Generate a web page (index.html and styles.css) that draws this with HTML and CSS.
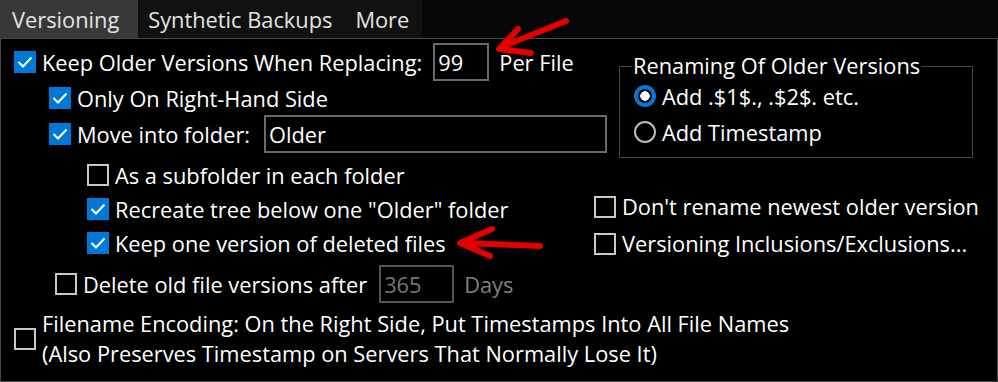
FILE: index.html
```html
<!DOCTYPE html>
<html lang="en">
<head>
	<meta charset="UTF-8">
	<title>Versioning</title>
	<link rel="stylesheet" href="styles.css">
</head>
<body>
    <div class="tabs">
        <div class="tab active">Versioning</div>
        <div class="tab">Synthetic Backups</div>
        <div class="tab">More</div>
    </div>
    <div class="panel">
        <div class="left">
            <div class="row r1">
                <span class="cb on"><svg viewBox="0 0 22 22"><polyline points="4.5,11 9,15.5 17.5,6.5"/></svg></span>
                <span>Keep Older Versions When Replacing:</span>
                <span class="field num">99</span>
                <span class="after">Per File</span>
            </div>
            <div class="row r2">
                <span class="cb on"><svg viewBox="0 0 22 22"><polyline points="4.5,11 9,15.5 17.5,6.5"/></svg></span>
                <span>Only On Right-Hand Side</span>
            </div>
            <div class="row r3">
                <span class="cb on"><svg viewBox="0 0 22 22"><polyline points="4.5,11 9,15.5 17.5,6.5"/></svg></span>
                <span>Move into folder:</span>
                <span class="field folder">Older</span>
            </div>
            <div class="row r4">
                <span class="cb"></span>
                <span>As a subfolder in each folder</span>
            </div>
            <div class="row r5">
                <span class="cb on"><svg viewBox="0 0 22 22"><polyline points="4.5,11 9,15.5 17.5,6.5"/></svg></span>
                <span>Recreate tree below one "Older" folder</span>
            </div>
            <div class="row r6">
                <span class="cb on"><svg viewBox="0 0 22 22"><polyline points="4.5,11 9,15.5 17.5,6.5"/></svg></span>
                <span>Keep one version of deleted files</span>
            </div>
            <div class="row r7">
                <span class="cb"></span>
                <span>Delete old file versions after</span>
                <span class="field days disabled">365</span>
                <span class="after dim">Days</span>
            </div>
            <div class="row r8">
                <span class="cb"></span>
                <span class="two">Filename Encoding: On the Right Side, Put Timestamps Into All File Names<br>(Also Preserves Timestamp on Servers That Normally Lose It)</span>
            </div>
        </div>
        <div class="right">
            <fieldset class="group">
                <legend>Renaming Of Older Versions</legend>
                <div class="radio-row"><span class="radio on"></span><span>Add .$1$., .$2$. etc.</span></div>
                <div class="radio-row"><span class="radio"></span><span>Add Timestamp</span></div>
            </fieldset>
            <div class="row rr1">
                <span class="cb"></span>
                <span>Don't rename newest older version</span>
            </div>
            <div class="row rr2">
                <span class="cb"></span>
                <span>Versioning Inclusions/Exclusions...</span>
            </div>
        </div>
    </div>
    <!-- red annotation arrows -->
    <svg class="marks" viewBox="0 0 998 382">
        <path d="M566 21 L504 46 M518 29 L499 49 L531 53"/>
        <path d="M540 246 L462 243 M492 229 L460 243 L490 256"/>
    </svg>
</body>
</html>
```

FILE: styles.css
```css
	*{
		margin: 0px;
		padding: 0px;
	}
    html{height:100%;}
    body{
        width: 998px;
        height: 382px;
        background: #060606;
        color: #fff;
        font-family: "Open Sans", "Noto Sans", sans-serif;
        font-size: 21.8px;
        position: relative;
        overflow: hidden;
    }
    .tabs{
        display: flex;
        height: 38px;
        width: fit-content;
        background: #111;
        white-space: nowrap;
    }
    .tab{
        padding: 2px 13px 0 10px;
        line-height: 36px;
        color: #e4e4e4;
        flex: none;
    }
    .tab.active{
        background: #383838;
        padding: 2px 19px 0 12px;
    }
    .panel{
        height: 344px;
        box-sizing: border-box;
        border: 1px solid #464646;
        background: #000;
        display: grid;
        grid-template-columns: 593px 1fr;
    }
    .left{
        padding-left: 13px;
    }
    .row{
        display: flex;
        align-items: center;
        white-space: nowrap;
    }
    .cb{
        width: 22px;
        height: 22px;
        box-sizing: border-box;
        border: 2.5px solid #c8c8c8;
        margin-right: 6px;
        flex: none;
    }
    .cb.on{
        background: #0078d7;
        border: none;
    }
    .cb svg{
        display: block;
        width: 22px;
        height: 22px;
        fill: none;
        stroke: #fff;
        stroke-width: 2;
    }
    .field{
        height: 38px;
        box-sizing: border-box;
        border: 2px solid #6a6a6a;
        padding-left: 3px;
        display: flex;
        align-items: center;
        flex: none;
    }
    .field.num{width: 56px;margin-left: 11px;}
    .field.folder{width: 343px;margin-left: 14px;}
    .field.days{width: 75px;margin-left: 12px;}
    .field.disabled{
        border-color: #555;
        color: #777;
    }
    .after{margin-left: 10px;}
    .dim{color: #808080;}

    .r1{margin-top: 4px;height: 38px;}
    .r2{height: 34px;padding-left: 35px;}
    .r3{height: 38px;padding-left: 35px;}
    .r4{margin-top: 5px;height: 34px;padding-left: 73px;}
    .r5{height: 34px;padding-left: 73px;}
    .r6{height: 34px;padding-left: 73px;}
    .r7{margin-top: 5px;height: 38px;padding-left: 41px;}
    .r8{margin-top: 6px;}
    .two{line-height: 30px;}

    .group{
        margin: 15px 0 0 25px;
        width: 354px;
        box-sizing: border-box;
        border: 1px solid #464646;
        padding: 0 0 7px 12px;
    }
    .group legend{
        padding: 0 1px;
        line-height: 24px;
    }
    .radio-row{
        display: flex;
        align-items: center;
        height: 36px;
    }
    .radio{
        width: 22px;
        height: 22px;
        box-sizing: border-box;
        border-radius: 50%;
        border: 2.5px solid #bdbdbd;
        margin: 0 6px 0 2px;
        flex: none;
    }
    .radio.on{
        border: 4px solid #0078d7;
        background: radial-gradient(circle, #fff 0 4.5px, #000 5px);
    }
    .rr1{margin-top: 30px;height: 37px;}
    .rr2{height: 37px;}

    .marks{
        position: absolute;
        left: 0;
        top: 0;
        width: 998px;
        height: 382px;
        pointer-events: none;
    }
    .marks path{
        fill: none;
        stroke: #e50000;
        stroke-width: 6;
        stroke-linecap: round;
        stroke-linejoin: round;
    }
```
